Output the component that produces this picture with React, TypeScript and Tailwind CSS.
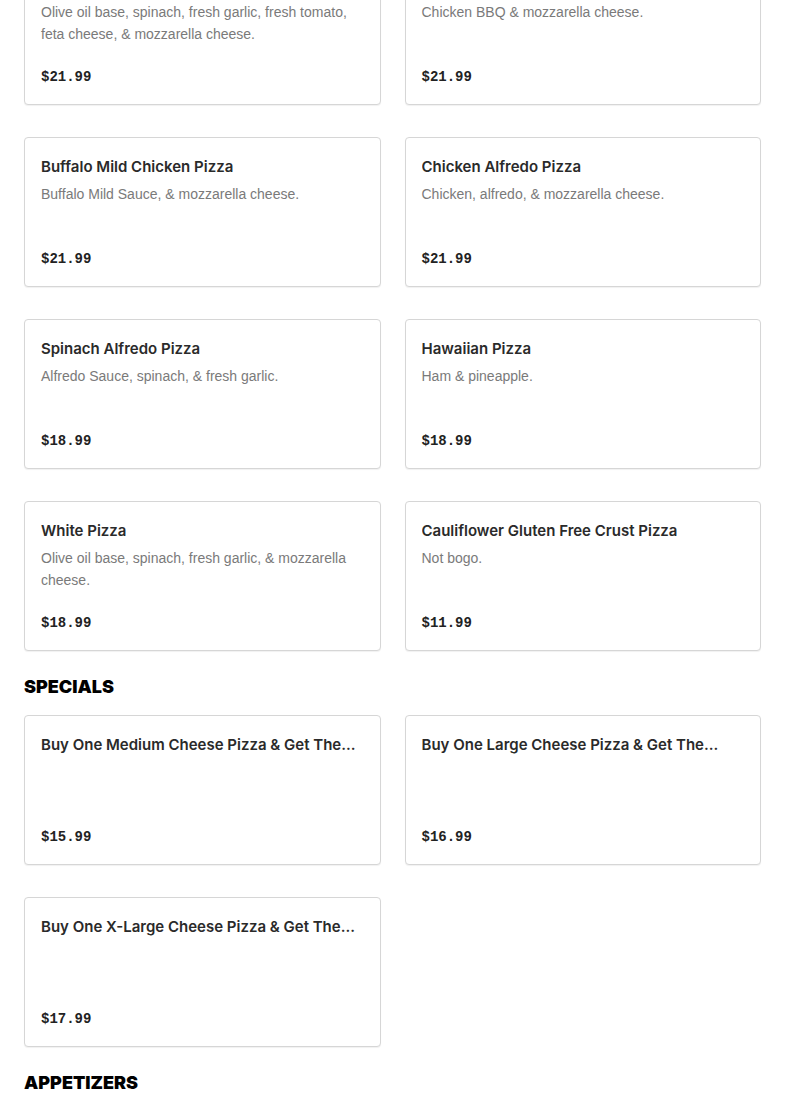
type Item = { name: string; desc?: string; price: string }

const PIZZAS: Item[] = [
  { name: "Mediterranean Pizza", desc: "Olive oil base, spinach, fresh garlic, fresh tomato, feta cheese, & mozzarella cheese.", price: "$21.99" },
  { name: "BBQ Chicken Pizza", desc: "Chicken BBQ & mozzarella cheese.", price: "$21.99" },
  { name: "Buffalo Mild Chicken Pizza", desc: "Buffalo Mild Sauce, & mozzarella cheese.", price: "$21.99" },
  { name: "Chicken Alfredo Pizza", desc: "Chicken, alfredo, & mozzarella cheese.", price: "$21.99" },
  { name: "Spinach Alfredo Pizza", desc: "Alfredo Sauce, spinach, & fresh garlic.", price: "$18.99" },
  { name: "Hawaiian Pizza", desc: "Ham & pineapple.", price: "$18.99" },
  { name: "White Pizza", desc: "Olive oil base, spinach, fresh garlic, & mozzarella cheese.", price: "$18.99" },
  { name: "Cauliflower Gluten Free Crust Pizza", desc: "Not bogo.", price: "$11.99" },
]

const SPECIALS: Item[] = [
  { name: "Buy One Medium Cheese Pizza & Get The...", price: "$15.99" },
  { name: "Buy One Large Cheese Pizza & Get The...", price: "$16.99" },
  { name: "Buy One X-Large Cheese Pizza & Get The...", price: "$17.99" },
]

const APPETIZERS: Item[] = [
  { name: "Garlic Knots", desc: "Six pieces.", price: "$5.99" },
  { name: "Mozzarella Sticks", desc: "Six pieces with marinara.", price: "$8.99" },
]

function MenuCard({ item }: { item: Item }) {
  return (
    <div className="flex h-[150px] flex-col rounded border border-[#d6d6d6] bg-white px-4 pt-[19px] pb-[17px] shadow-[0_1px_1px_rgba(0,0,0,0.06)]">
      <h3 className="truncate font-['Inter',sans-serif] text-[15px] font-semibold leading-[20px] text-[#2a2a2a]">
        {item.name}
      </h3>
      {item.desc && (
        <p className="mt-[6px] text-[14px] leading-[22px] text-[#7a7a7a]">{item.desc}</p>
      )}
      <div className="mt-auto font-['Liberation_Mono',monospace] text-[14px] font-bold leading-[20px] text-[#222]">
        {item.price}
      </div>
    </div>
  )
}

function Section({ title, items }: { title?: string; items: Item[] }) {
  return (
    <section>
      {title && (
        <h2 className="pt-[26px] pb-[18px] font-['Inter',sans-serif] text-[18px] font-black uppercase leading-[20px] text-black">
          {title}
        </h2>
      )}
      <div className="grid grid-cols-2 gap-x-6 gap-y-8">
        {items.map((item) => (
          <MenuCard key={item.name} item={item} />
        ))}
      </div>
    </section>
  )
}

export default function App() {
  return (
    <div className="h-[1111px] overflow-hidden bg-white font-['Liberation_Sans',Arial,sans-serif]">
      <div className="-mt-[45px] px-6">
        <Section items={PIZZAS} />
        <Section title="Specials" items={SPECIALS} />
        <Section title="Appetizers" items={APPETIZERS} />
      </div>
    </div>
  )
}
